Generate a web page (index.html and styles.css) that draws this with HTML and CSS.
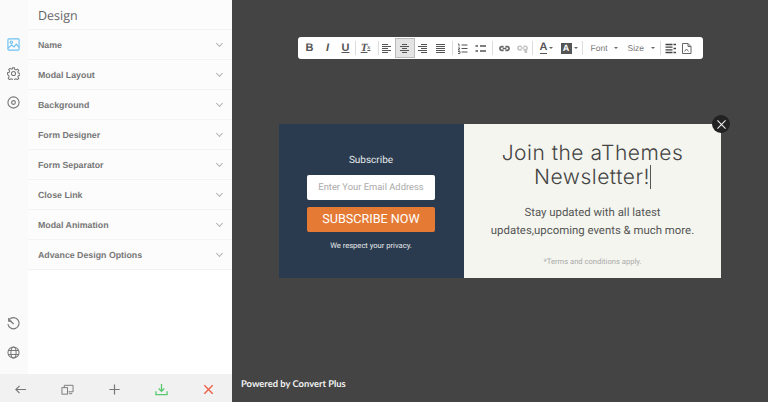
FILE: index.html
```html
<!DOCTYPE html>
<html lang="en">
<head>
    <meta charset="UTF-8">
    <title>Design</title>
    <link rel="stylesheet" href="styles.css">
</head>
<body>
    <!-- Left sidebar -->
    <div class="sidebar">
        <div class="sidebar-top">
            <div class="rail">
                <div class="rail-group">
                    <svg class="rail-icon" viewBox="0 0 14 14" fill="none" stroke="#6cc1f2" stroke-width="1.200">
                        <rect x="1" y="1" width="12" height="12" rx="1"/>
                        <circle cx="4.600" cy="4.600" r="1.300"/>
                        <path d="M1 11l4-3.600 2.600 2.200L10 6.500l3 3.500"/>
                    </svg>
                    <svg class="rail-icon" viewBox="0 0 14 14" fill="none" stroke="#777" stroke-width="1.100">
                        <circle cx="7" cy="7" r="2.200"/>
                        <path d="M6 .8h2l.4 1.800 1.300.6 1.600-1 1.400 1.400-1 1.600.5 1.300 1.700.4v2l-1.700.4-.5 1.300 1 1.600-1.400 1.400-1.600-1-1.300.5-.4 1.700H6l-.4-1.700-1.300-.5-1.600 1-1.400-1.400 1-1.600-.5-1.300L.6 8.100v-2l1.700-.4.5-1.300-1-1.600 1.400-1.400 1.600 1 1.300-.6z"/>
                    </svg>
                    <svg class="rail-icon" viewBox="0 0 14 14" fill="none" stroke="#777" stroke-width="1.200">
                        <circle cx="7" cy="7" r="6"/>
                        <circle cx="7" cy="7" r="2"/>
                    </svg>
                </div>
                <div class="rail-group">
                    <svg class="rail-icon" viewBox="0 0 14 14" fill="none" stroke="#777" stroke-width="1.200">
                        <path d="M2.300 2.900A6 6 0 1 1 1 7.500"/>
                        <path d="M1.800 1v3.600h3.600"/>
                        <path d="M2.300 3.200l4.900 4.300"/>
                    </svg>
                    <svg class="rail-icon" viewBox="0 0 14 14" fill="none" stroke="#777" stroke-width="1.100">
                        <circle cx="7" cy="7" r="6"/>
                        <ellipse cx="7" cy="7" rx="2.800" ry="6"/>
                        <path d="M1.500 4.800h11M1.500 9.200h11"/>
                    </svg>
                </div>
            </div>
            <div class="panel">
                <div class="panel-title">Design</div>
                <div class="panel-item">Name<span class="chev"></span></div>
                <div class="panel-item">Modal Layout<span class="chev"></span></div>
                <div class="panel-item">Background<span class="chev"></span></div>
                <div class="panel-item">Form Designer<span class="chev"></span></div>
                <div class="panel-item">Form Separator<span class="chev"></span></div>
                <div class="panel-item">Close Link<span class="chev"></span></div>
                <div class="panel-item">Modal Animation<span class="chev"></span></div>
                <div class="panel-item">Advance Design Options<span class="chev"></span></div>
            </div>
        </div>
        <div class="bottom-bar">
            <svg class="bar-icon" viewBox="0 0 14 14" fill="none" stroke="#777" stroke-width="1.200">
                <path d="M13 7H2M6 3L2 7l4 4"/>
            </svg>
            <svg class="bar-icon" viewBox="0 0 14 14" fill="none" stroke="#777" stroke-width="1">
                <path d="M3.500 5V2.500H13v7H8"/>
                <rect x="1" y="5" width="6" height="7"/>
                <path d="M8.500 11.500H12"/>
            </svg>
            <svg class="bar-icon" viewBox="0 0 14 14" fill="none" stroke="#777" stroke-width="1.300">
                <path d="M7 1.500v11M1.500 7h11"/>
            </svg>
            <svg class="bar-icon" viewBox="0 0 14 14" fill="none" stroke="#59c96f" stroke-width="1.400">
                <path d="M7 1v7.500M4 6l3 3 3-3"/>
                <path d="M1 9v3.500h12V9"/>
            </svg>
            <svg class="bar-icon" viewBox="0 0 14 14" fill="none" stroke="#ee5c42" stroke-width="1.400">
                <path d="M2.500 2.500l9 9M11.500 2.500l-9 9"/>
            </svg>
        </div>
    </div>

    <!-- Preview area -->
    <div class="stage">
        <div class="toolbar">
            <div class="tool-group g-format">
                <span class="tool tool-b">B</span>
                <span class="tool tool-i">I</span>
                <span class="tool tool-u">U</span>
            </div>
            <div class="tool-group g-clear">
                <span class="tool tool-tx">T<sub>x</sub></span>
            </div>
            <div class="tool-group g-align">
                <span class="tool"><svg class="tool-svg" viewBox="0 0 11 11" stroke="#555" stroke-width="1.200"><path d="M1 1.500h6M1 3.500h9M1 5.500h6M1 7.500h9M1 9.500h6"/></svg></span>
                <span class="tool tool-active"><svg class="tool-svg" viewBox="0 0 11 11" stroke="#555" stroke-width="1.200"><path d="M3 1.500h5M1 3.500h9M3 5.500h5M1 7.500h9M3 9.500h5"/></svg></span>
                <span class="tool"><svg class="tool-svg" viewBox="0 0 11 11" stroke="#555" stroke-width="1.200"><path d="M4 1.500h6M1 3.500h9M4 5.500h6M1 7.500h9M4 9.500h6"/></svg></span>
                <span class="tool"><svg class="tool-svg" viewBox="0 0 11 11" stroke="#555" stroke-width="1.200"><path d="M1 1.500h9M1 3.500h9M1 5.500h9M1 7.500h9M1 9.500h9"/></svg></span>
            </div>
            <div class="tool-group g-list">
                <span class="tool"><svg class="tool-svg" viewBox="0 0 11 11" fill="none" stroke="#555" stroke-width=".9"><path d="M4.500 2h6M4.500 5.500h6M4.500 9h6" stroke-width="1.200"/><path d="M1 1h1v2.500M1 5h2L1 7h2M1 8.500h2v2H1"/></svg></span>
                <span class="tool"><svg class="tool-svg" viewBox="0 0 11 11" stroke="#555" stroke-width="1.600"><path d="M5 3h6M5 8h6M.5 3h2.500M.5 8h2.500"/></svg></span>
            </div>
            <div class="tool-group g-link">
                <span class="tool"><svg class="tool-svg" viewBox="0 0 12 10" fill="none" stroke="#666" stroke-width="1.800"><path d="M5 3H3a2 2 0 0 0 0 4h2M7 3h2a2 2 0 0 1 0 4H7M4 5h4"/></svg></span>
                <span class="tool"><svg class="tool-svg" viewBox="0 0 12 10" fill="none" stroke="#c4c4c4" stroke-width="1.700"><path d="M5 2.500H3a2 2 0 0 0 0 4h2M7 2.500h2a2 2 0 0 1 0 4H7M4 4.500h4M8.500 7l2.500 2.500M11 7L8.500 9.500"/></svg></span>
            </div>
            <div class="tool-group g-color">
                <span class="tool tool-color"><b>A</b><i class="caret"></i></span>
                <span class="tool tool-color"><b class="tool-bg">A</b><i class="caret"></i></span>
            </div>
            <div class="tool-group g-select">
                <span class="tool-label">Font<i class="caret"></i></span>
                <span class="tool-label">Size<i class="caret"></i></span>
            </div>
            <div class="tool-group g-last">
                <span class="tool"><svg class="tool-svg" viewBox="0 0 11 11" stroke="#444" stroke-width="1.300"><path d="M.5 1.500h7M.5 4.200h7M.5 6.900h7M.5 9.500h7M8.500 1.500H11M8.500 5.500H11M8.500 9.500H11"/></svg></span>
                <span class="tool"><svg class="tool-svg" viewBox="0 0 11 11" fill="none" stroke="#666" stroke-width="1"><path d="M1.500 .5H7L10 3.500v7H1.500zM7 .5v3h3"/><path d="M3.500 8.500L5.500 6l2 2.500" stroke-width=".9"/></svg></span>
            </div>
        </div>

        <div class="modal">
            <div class="modal-left">
                <div class="sub-title">Subscribe</div>
                <div class="email-box">Enter Your Email Address</div>
                <div class="sub-button">SUBSCRIBE NOW</div>
                <div class="privacy">We respect your privacy.</div>
            </div>
            <div class="modal-right">
                <div class="news-title">Join the aThemes<br>Newsletter!<span class="cursor"></span></div>
                <div class="news-text">Stay updated with all latest<br>updates,upcoming events &amp; much more.</div>
                <div class="terms">*Terms and conditions apply.</div>
            </div>
            <div class="close-btn">
                <svg viewBox="0 0 10 10" fill="none" stroke="#eee" stroke-width="1.200"><path d="M.5 .5l9 9M9.500 .5l-9 9"/></svg>
            </div>
        </div>

        <div class="powered">Powered by Convert Plus</div>
    </div>
</body>
</html>
```

FILE: styles.css
```css
* {
    box-sizing: border-box;
}
html, body {
    height: 100%;
}
body {
    margin: 0;
    display: flex;
    overflow: hidden;
    font-family: "Liberation Sans", Arial, sans-serif;
    text-rendering: geometricPrecision;
    background-color: #444;
}

/* Sidebar */
.sidebar {
    width: 232px;
    flex: none;
    display: flex;
    flex-direction: column;
    background: #fff;
}
.sidebar-top {
    flex: 1;
    display: flex;
    min-height: 0;
}
.rail {
    width: 28px;
    background: #fafafa;
    display: flex;
    flex-direction: column;
    justify-content: space-between;
    align-items: center;
    padding: 38px 2px 15px 0;
}
.rail-group {
    display: flex;
    flex-direction: column;
    gap: 16px;
}
.rail-icon {
    width: 13px;
    height: 13px;
    display: block;
}
.panel {
    flex: 1;
}
.panel-title {
    height: 30px;
    padding: 7px 0 0 10px;
    font-family: "Open Sans", sans-serif;
    font-size: 12.500px;
    color: #666;
    background: #fcfcfc;
    border-bottom: 1px solid #f3f3f3;
}
.panel-item {
    height: 30px;
    padding: 1px 9px 0 10px;
    display: flex;
    align-items: center;
    justify-content: space-between;
    font-size: 8.800px;
    font-weight: bold;
    color: #777;
    background: #fcfcfc;
    border-bottom: 1px solid #f3f3f3;
}
.chev {
    width: 5px;
    height: 5px;
    margin: -3px 1px 0 0;
    border-right: 1px solid #b4b4b4;
    border-bottom: 1px solid #b4b4b4;
    transform: rotate(45deg);
}
.bottom-bar {
    height: 28px;
    padding: 3px 17px 0 14px;
    background: #f1f1f1;
    display: flex;
    align-items: center;
    justify-content: space-between;
}
.bar-icon {
    width: 13px;
    height: 13px;
    display: block;
}

/* Preview */
.stage {
    flex: 1;
    display: flex;
    flex-direction: column;
    align-items: center;
    padding-top: 37px;
}
.toolbar {
    width: 405px;
    height: 22px;
    padding-left: 5px;
    background: #fff;
    border-radius: 3px;
    display: flex;
    align-items: center;
}
.tool-group {
    display: flex;
    align-items: center;
    gap: 4px;
    height: 14px;
    border-right: 1px solid #ddd;
}
.g-format {
    padding-right: 2px;
}
.g-clear {
    padding: 0 5px 0 3px;
}
.g-align {
    padding: 0 4px 0 1px;
}
.g-list {
    padding: 0 4px 0 3px;
}
.g-link {
    padding: 0 2px 0 5px;
}
.g-color {
    gap: 1px;
    padding: 0 1px 0 7px;
}
.g-select {
    gap: 10px;
    padding: 0 5px 0 8px;
}
.g-last {
    gap: 2px;
    padding-left: 3px;
    border-right: none;
}
.tool {
    width: 14px;
    height: 14px;
    display: flex;
    align-items: center;
    justify-content: center;
    font-size: 11px;
    line-height: 14px;
    color: #555;
}
.tool-b {
    font-weight: bold;
}
.tool-i {
    font-style: italic;
    font-weight: bold;
}
.tool-u {
    font-weight: bold;
    text-decoration: underline;
}
.tool-tx {
    font-family: "Liberation Serif", serif;
    font-style: italic;
    font-weight: bold;
    text-decoration: underline;
}
.tool-tx sub {
    font-size: 6px;
    line-height: 6px;
}
.tool-svg {
    width: 11px;
    height: 11px;
    display: block;
}
.tool-active {
    background: #e4e4e4;
    box-shadow: 0 0 0 2px #e4e4e4, 0 0 0 3px #bbb;
}
.tool-color {
    width: 20px;
    justify-content: flex-start;
}
.tool-color b {
    border-bottom: 1px solid #555;
    line-height: 11px;
}
.tool-color .tool-bg {
    width: 11px;
    height: 11px;
    line-height: 11px;
    font-size: 9px;
    text-align: center;
    color: #fff;
    background: #555;
    border: none;
}
.caret {
    margin-left: 2px;
    border-left: 2px solid transparent;
    border-right: 2px solid transparent;
    border-top: 2px solid #666;
}
.tool-label {
    width: 27px;
    display: flex;
    align-items: center;
    justify-content: space-between;
    white-space: nowrap;
    font-size: 8.500px;
    color: #777;
}

/* Modal */
.modal {
    width: 442px;
    height: 154px;
    margin-top: 65px;
    display: flex;
    position: relative;
    font-family: Roboto, sans-serif;
}
.modal-left {
    width: 185px;
    padding: 29px 1px 0 0;
    background: #2a3b4f;
    display: flex;
    flex-direction: column;
    align-items: center;
}
.sub-title {
    font-size: 10px;
    line-height: 15px;
    color: #e6e8ea;
}
.email-box {
    width: 128px;
    height: 25px;
    margin-top: 7px;
    background: #fff;
    border-radius: 2px;
    font-size: 9.400px;
    line-height: 25px;
    text-align: center;
    color: #aaa;
}
.sub-button {
    width: 128px;
    height: 25px;
    margin-top: 7px;
    background: #e57a34;
    border-radius: 2px;
    font-size: 12.600px;
    line-height: 25px;
    text-align: center;
    color: #fff;
}
.privacy {
    margin-top: 9px;
    font-size: 7.600px;
    line-height: 10px;
    color: #e6e8ea;
}
.modal-right {
    flex: 1;
    background: #f4f5ef;
    display: flex;
    flex-direction: column;
    align-items: center;
    padding-top: 18px;
    text-align: center;
}
.news-title {
    font-family: Inter, sans-serif;
    font-size: 21px;
    font-weight: 300;
    line-height: 23px;
    letter-spacing: .5px;
    color: #444;
}
.cursor {
    display: inline-block;
    width: 1px;
    height: 24px;
    vertical-align: -5px;
    background: #555;
}
.news-text {
    margin-top: 14px;
    font-size: 11.400px;
    line-height: 18px;
    color: #555;
}
.terms {
    margin-top: 18px;
    font-size: 7.600px;
    line-height: 10px;
    color: #aaa;
}
.close-btn {
    position: absolute;
    top: -9px;
    right: -9px;
    width: 18px;
    height: 18px;
    border-radius: 50%;
    background: #222;
    display: flex;
    align-items: center;
    justify-content: center;
}
.close-btn svg {
    width: 9px;
    height: 9px;
}
.powered {
    margin-top: auto;
    margin-bottom: 12px;
    align-self: flex-start;
    padding-left: 9px;
    font-family: Lato, sans-serif;
    font-size: 9.400px;
    font-weight: bold;
    color: #f2f2f2;
}
```
